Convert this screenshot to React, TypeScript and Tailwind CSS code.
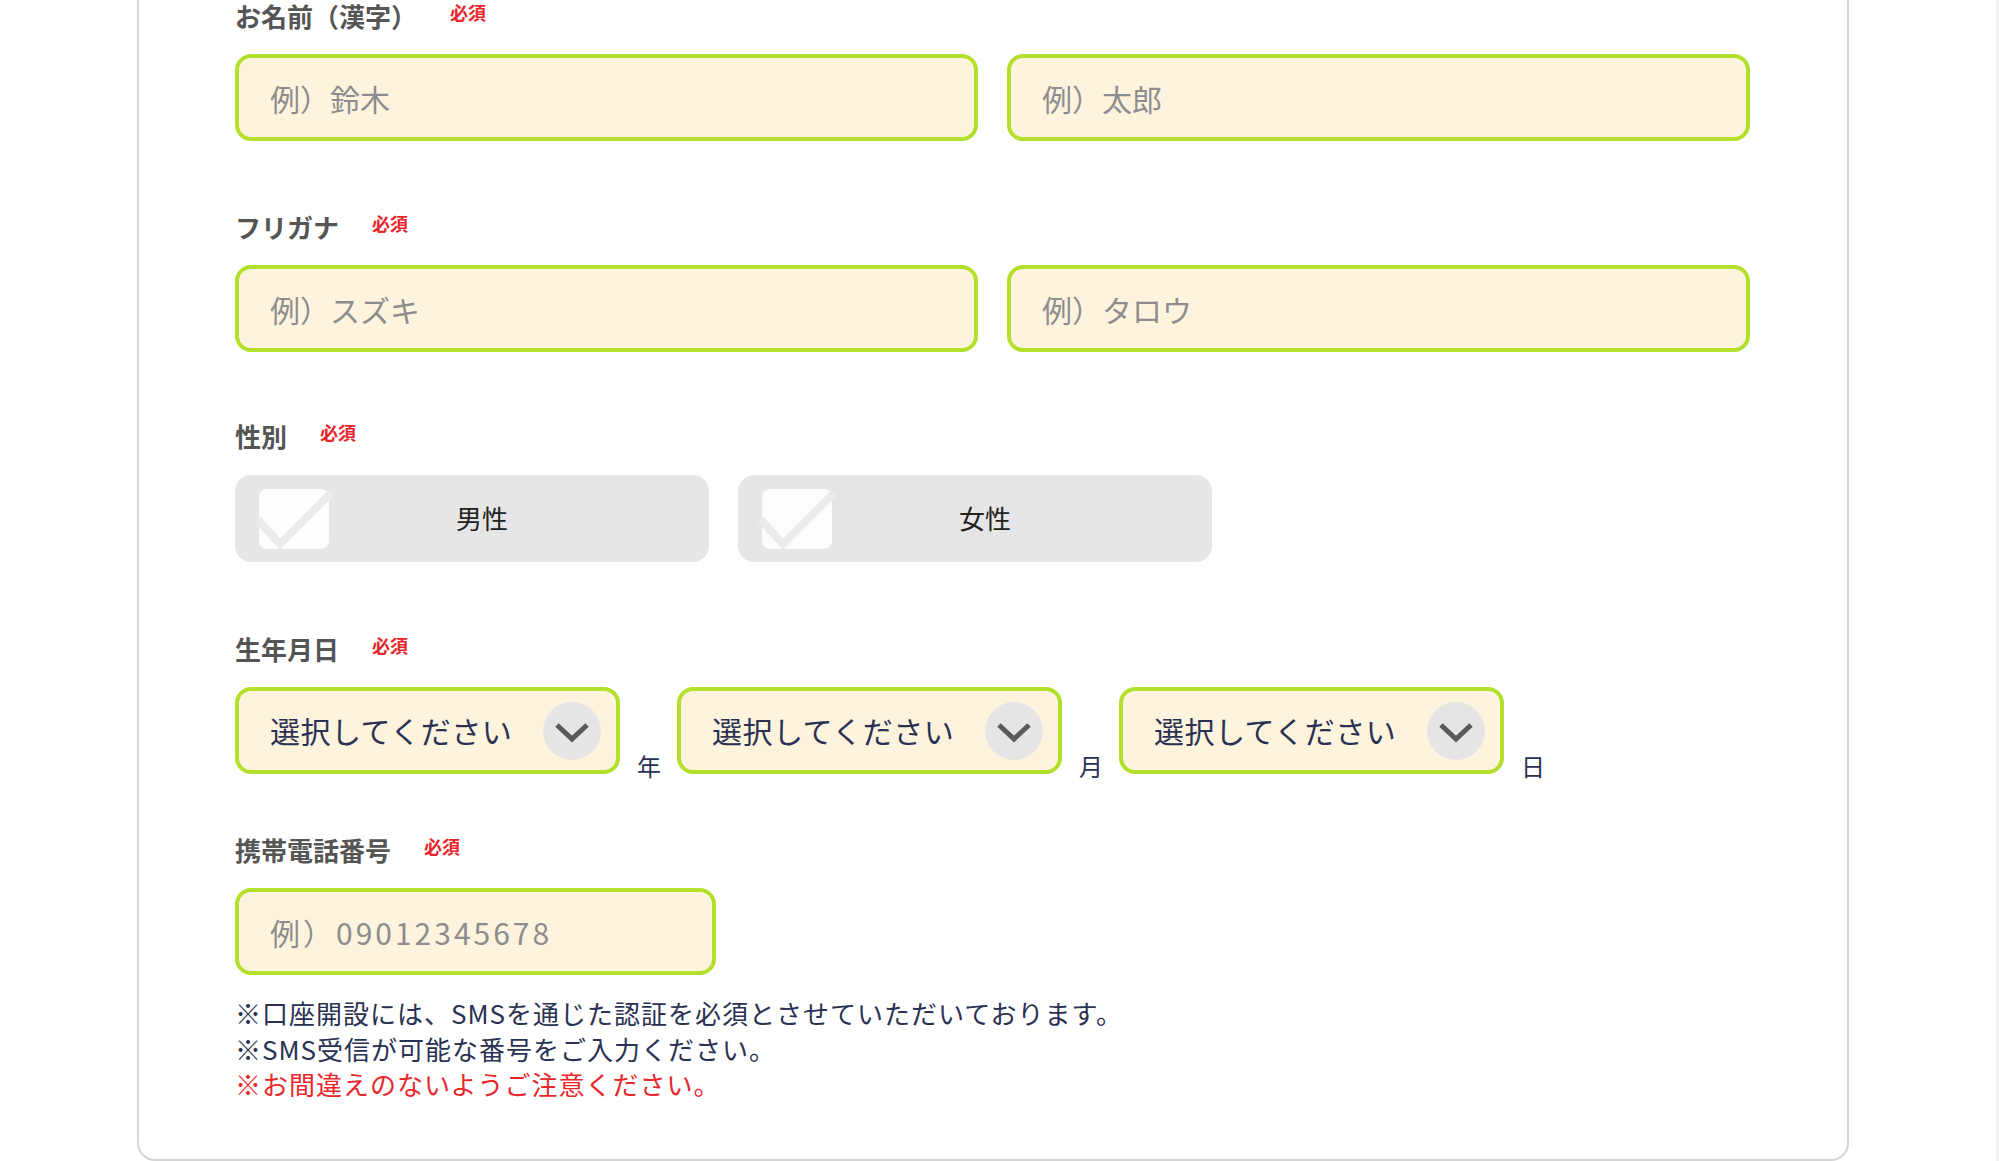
import React from "react";

const font = "font-['Noto_Sans_CJK_JP','Noto_Sans',sans-serif]";

function Label({ text, first }: { text: string; first?: boolean }) {
  return (
    <div className={`flex items-center ${first ? "h-[32px]" : "h-[40px]"}`}>
      <span className="text-[26px] font-bold leading-none text-[#555555]">{text}</span>
      <span className="ml-[33px] -mt-[8px] text-[18px] font-bold leading-none text-[#e8262b]">必須</span>
    </div>
  );
}

function TextInput({ placeholder, className }: { placeholder: string; className: string }) {
  return (
    <input
      type="text"
      placeholder={placeholder}
      className={`${className} h-[87px] rounded-[16px] border-4 border-[#b3e02d] bg-[#fef4de] pl-[31px] text-[30px] text-[#2a3152] outline-none placeholder:text-[#8d8d8d]`}
    />
  );
}

function GenderOption({ label }: { label: string }) {
  return (
    <label className="flex h-[87px] w-[474px] cursor-pointer items-center rounded-[16px] bg-[#e6e6e6] pl-[24px] pr-[74px]">
      <span className="relative h-[60px] w-[70px] shrink-0 rounded-[8px] bg-[#fdfdfd]">
        <svg viewBox="0 0 70 60" className="absolute inset-0 h-[60px] w-[70px] overflow-visible">
          <polyline points="-2,30 21,55 72,4" fill="none" stroke="#ebebeb" strokeWidth="8" />
        </svg>
      </span>
      <span className="-mt-[3px] flex-1 text-center text-[26px] text-[#222222]">{label}</span>
    </label>
  );
}

function DateSelect({ unit }: { unit: string }) {
  return (
    <>
      <div className="relative h-[87px] w-[385px]">
        <select className="h-full w-full appearance-none rounded-[16px] border-4 border-[#b3e02d] bg-[#fef4de] pl-[31px] text-[30px] tracking-[0.5px] text-[#2a3152] outline-none">
          <option>選択してください</option>
        </select>
        <span className="pointer-events-none absolute right-[19px] top-1/2 flex h-[58px] w-[58px] -translate-y-1/2 items-center justify-center rounded-full bg-[#e5e5e5]">
          <svg viewBox="0 0 38 22" className="mt-[3px] h-[22px] w-[38px]">
            <polyline points="4,4 19,18 34,4" fill="none" stroke="#5a5a5a" strokeWidth="5" />
          </svg>
        </span>
      </div>
      <span className="mb-[-4px] ml-[17px] mr-[16px] text-[24px] leading-none text-[#2a3152]">{unit}</span>
    </>
  );
}

export default function App() {
  return (
    <div className={`flex h-[1161px] w-full overflow-hidden bg-white ${font}`}>
      <div className="ml-[137px] w-[1712px] self-start rounded-b-[18px] border-2 border-t-0 border-[#d5d5d5] pb-[57px] pl-[96px]">
        <div>
          <Label text="お名前（漢字）" first />
          <div className="mt-[22px] flex gap-[29px]">
            <TextInput placeholder="例）鈴木" className="w-[743px]" />
            <TextInput placeholder="例）太郎" className="w-[743px]" />
          </div>
        </div>

        <div className="mt-[66px]">
          <Label text="フリガナ" />
          <div className="mt-[18px] flex gap-[29px]">
            <TextInput placeholder="例）スズキ" className="w-[743px]" />
            <TextInput placeholder="例）タロウ" className="w-[743px]" />
          </div>
        </div>

        <div className="mt-[64px]">
          <Label text="性別" />
          <div className="mt-[19px] flex gap-[29px]">
            <GenderOption label="男性" />
            <GenderOption label="女性" />
          </div>
        </div>

        <div className="mt-[67px]">
          <Label text="生年月日" />
          <div className="mt-[18px] flex items-end">
            <DateSelect unit="年" />
            <DateSelect unit="月" />
            <DateSelect unit="日" />
          </div>
        </div>

        <div className="mt-[56px]">
          <Label text="携帯電話番号" />
          <div className="mt-[18px] flex">
            <TextInput placeholder="例）09012345678" className="w-[481px] tracking-[3px]" />
          </div>
          <div className="mt-[20px] text-[26px] leading-[35.5px] tracking-[1px] text-[#2a3152]">
            <p>※口座開設には、SMSを通じた認証を必須とさせていただいております。</p>
            <p>※SMS受信が可能な番号をご入力ください。</p>
            <p className="text-[#e8282b]">※お間違えのないようご注意ください。</p>
          </div>
        </div>
      </div>
      <div className="flex-1" />
      <div className="h-full w-[3px] bg-[#f2f2f2]" />
    </div>
  );
}
